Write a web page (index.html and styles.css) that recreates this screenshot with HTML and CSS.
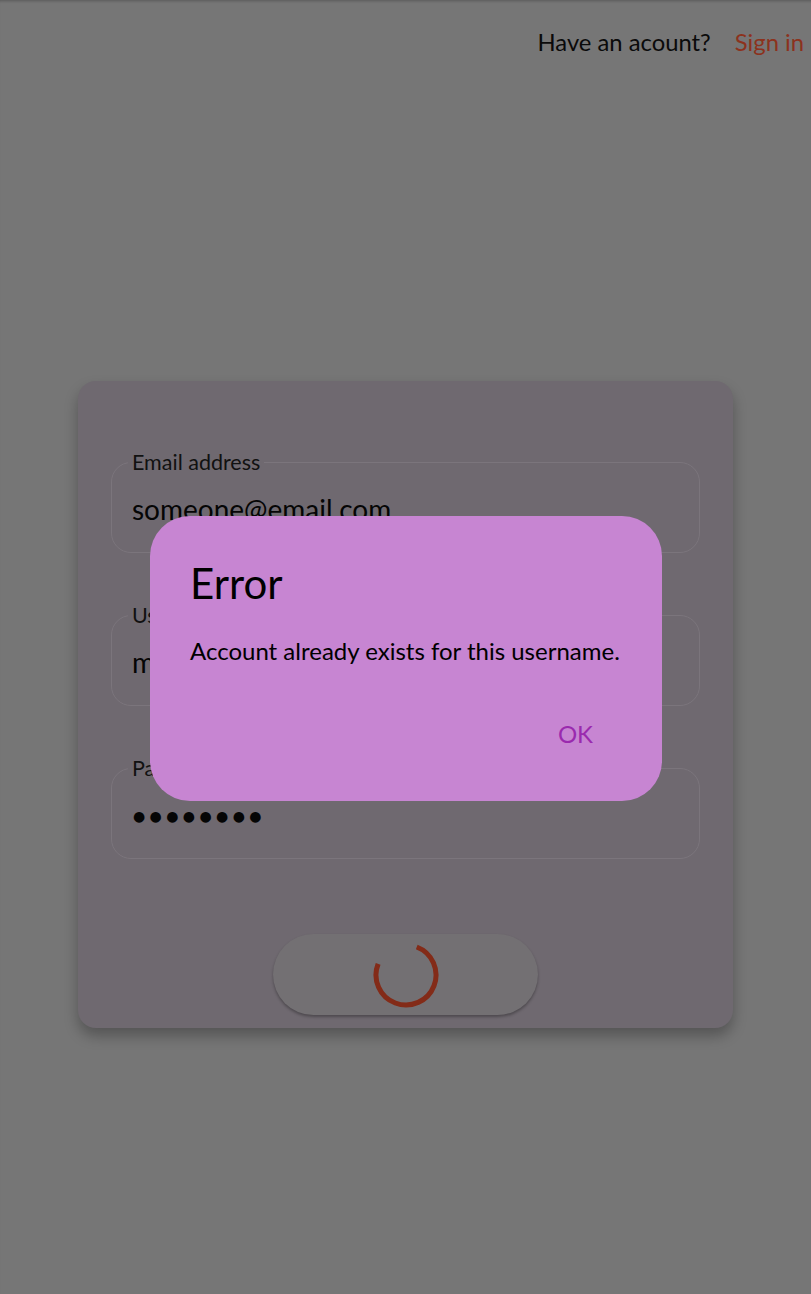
FILE: index.html
```html
<!DOCTYPE html>
<html>
<head>
<meta charset="utf-8">
<link rel="stylesheet" href="styles.css">
</head>
<body>
<div class="page">
  <header class="topbar">
    <span class="question">Have an acount?</span>
    <a class="signin">Sign in</a>
  </header>
  <main class="card">
    <fieldset class="field">
      <legend>Email address</legend>
      <div class="value">someone@email.com</div>
    </fieldset>
    <fieldset class="field">
      <legend>Username</legend>
      <div class="value">myusername</div>
    </fieldset>
    <fieldset class="field">
      <legend>Password</legend>
      <div class="value dots">●●●●●●●●</div>
    </fieldset>
    <div class="actions">
      <button class="submit">
        <svg width="70" height="70" viewBox="0 0 70 70">
          <circle cx="35" cy="35" r="30" fill="none" stroke="#832b18" stroke-width="5" stroke-dasharray="141.6 200" transform="rotate(-69 35 35)"/>
        </svg>
      </button>
    </div>
  </main>
  <div class="dialog">
    <h2 class="dialog-title">Error</h2>
    <p class="dialog-body">Account already exists for this username.</p>
    <div class="dialog-actions"><span class="ok">OK</span></div>
  </div>
</div>
</body>
</html>
```

FILE: styles.css
```css
html, body {
  margin: 0;
  padding: 0;
}
body {
  background: #767676;
  font-family: Lato, "Open Sans", sans-serif;
  color: #000;
  width: 811px;
  height: 1294px;
  overflow: hidden;
}
.page {
  position: relative;
  height: 1294px;
  box-shadow: inset 0 3px 3px -2px rgba(0,0,0,0.25);
}
.topbar {
  display: flex;
  justify-content: flex-end;
  align-items: baseline;
  gap: 24px;
  padding: 28px 7px 0 0;
  font-size: 23.8px;
  line-height: 29px;
}
.question { color: #0a0a0a; }
.signin { color: #8c321d; }
.card {
  width: 655px;
  box-sizing: border-box;
  margin: 324px auto 0;
  background: #6f6970;
  border-radius: 18px;
  padding: 69px 33px 13px;
  box-shadow: 0 8px 14px rgba(0,0,0,0.28);
  display: flex;
  flex-direction: column;
  gap: 50px;
}
.field {
  margin: 0;
  border: 1.5px solid #7b757c;
  border-radius: 20px;
  padding: 0 18px 0 19px;
  height: 103px;
  box-sizing: border-box;
}
.field legend {
  font-size: 21.5px;
  padding: 0 4px;
  margin-left: -3px;
  line-height: 24px;
  color: #111;
}
.value {
  font-size: 28px;
  line-height: 32px;
  padding-top: 19px;
  padding-left: 1px;
  color: #050505;
}
.dots {
  font-family: "DejaVu Sans", sans-serif;
  font-size: 14px;
  letter-spacing: 4.4px;
  padding-top: 20px;
  padding-left: 2px;
}
.actions {
  display: flex;
  justify-content: center;
  margin-top: 25px;
}
.submit {
  width: 265px;
  height: 81px;
  border: none;
  border-radius: 41px;
  background: #737073;
  box-shadow: 0 2px 3px rgba(0,0,0,0.3);
  display: flex;
  align-items: center;
  justify-content: center;
  padding: 0;
}
.dialog {
  position: absolute;
  left: 150px;
  top: 516px;
  width: 512px;
  height: 285px;
  box-sizing: border-box;
  background: #c785d2;
  border-radius: 40px;
  padding: 42px 40px 0;
}
.dialog-title {
  margin: 0;
  font-size: 42px;
  font-weight: 400;
  line-height: 50px;
}
.dialog-body {
  margin: 28px 0 0;
  font-size: 24px;
  line-height: 30px;
}
.dialog-actions {
  display: flex;
  justify-content: flex-end;
  margin-top: 53px;
  padding-right: 29px;
}
.ok {
  color: #9a2aae;
  font-size: 24px;
  line-height: 30px;
}
```
